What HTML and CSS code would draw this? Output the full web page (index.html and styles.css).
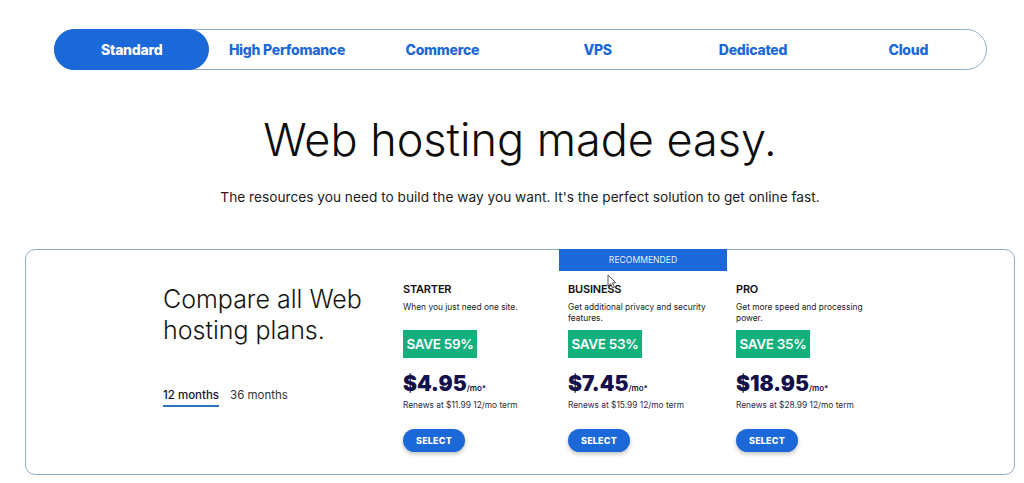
FILE: index.html
```html
<!DOCTYPE html>
<html lang="en">
<head>
  <meta charset="UTF-8" />
  <title>Web Hosting</title>
  <link rel="stylesheet" href="styles.css">
</head>
<body>
  <nav class="tabs">
    <a class="tab active">Standard</a>
    <a class="tab">High Perfomance</a>
    <a class="tab">Commerce</a>
    <a class="tab">VPS</a>
    <a class="tab">Dedicated</a>
    <a class="tab">Cloud</a>
  </nav>

  <div class="hero">
    <h1 class="title">Web hosting made easy.</h1>
    <p class="subtitle">The resources you need to build the way you want. It's the perfect solution to get online fast.</p>
  </div>

  <section class="compare">
    <div class="intro">
      <h2 class="intro-title">Compare all Web hosting plans.</h2>
      <div class="terms">
        <span class="term current">12 months</span>
        <span class="term">36 months</span>
      </div>
    </div>

    <div class="plan plan-starter">
      <h3 class="plan-name">STARTER</h3>
      <p class="plan-desc">When you just need one site.</p>
      <div class="save">SAVE 59%</div>
      <div class="price">$4.95<span class="per">/mo*</span></div>
      <p class="renew">Renews at $11.99 12/mo term</p>
      <a class="select">SELECT</a>
    </div>

    <div class="plan plan-business">
      <div class="recommended">RECOMMENDED</div>
      <h3 class="plan-name">BUSINESS</h3>
      <p class="plan-desc">Get additional privacy and security features.</p>
      <div class="save">SAVE 53%</div>
      <div class="price">$7.45<span class="per">/mo*</span></div>
      <p class="renew">Renews at $15.99 12/mo term</p>
      <a class="select">SELECT</a>
      <svg class="cursor" width="10" height="15" viewBox="0 0 10 15">
        <path d="M1 1v11l2.600-2.400 2 4.400 1.800-.8-2-4.300 3.400-.2z" fill="#fff" stroke="#555" stroke-width="1"/>
      </svg>
    </div>

    <div class="plan plan-pro">
      <h3 class="plan-name">PRO</h3>
      <p class="plan-desc">Get more speed and processing power.</p>
      <div class="save">SAVE 35%</div>
      <div class="price">$18.95<span class="per">/mo*</span></div>
      <p class="renew">Renews at $28.99 12/mo term</p>
      <a class="select">SELECT</a>
    </div>
  </section>
</body>
</html>
```

FILE: styles.css
```css
* {
  margin: 0;
  padding: 0;
  box-sizing: border-box;
  font-family: 'Inter', 'Liberation Sans', sans-serif;
}

body {
  background-color: #fff;
  color: #111;
  height: 483px;
  overflow: hidden;
  padding-top: 29px;
}

.tabs {
  display: flex;
  width: 933px;
  height: 41px;
  margin-left: 54px;
  border: 1px solid #8fadc9;
  border-radius: 21px;
}

.tab {
  flex: 1;
  display: flex;
  align-items: center;
  justify-content: center;
  color: #1b68d8;
  font-size: 14px;
  font-weight: 800;
  letter-spacing: -0.25px;
}

.tab.active {
  background-color: #1b68d8;
  color: #fff;
  border-radius: 21px;
  margin: -1px 0 -1px -1px;
}

.hero {
  padding-left: 16px;
  text-align: center;
}

.title {
  margin-top: 40px;
  font-size: 45px;
  line-height: 60px;
  font-weight: 300;
  color: #0c0c0c;
}

.subtitle {
  margin-top: 17px;
  font-size: 13.700px;
  line-height: 20px;
  color: #1c1c1c;
}

.compare {
  display: flex;
  width: 990px;
  height: 226px;
  margin: 42px 0 0 25px;
  padding-left: 137px;
  border: 1px solid #8fadc9;
  border-radius: 10px;
}

.intro {
  width: 240px;
  padding-top: 34px;
}

.intro-title {
  width: 215px;
  font-size: 25px;
  line-height: 31px;
  font-weight: 300;
  color: #151515;
}

.terms {
  display: flex;
  gap: 11px;
  margin-top: 40px;
  font-size: 11.500px;
}

.term {
  color: #333;
  line-height: 19px;
}

.term.current {
  color: #15152b;
  font-weight: 500;
  border-bottom: 2px solid #2f74b8;
}

.plan {
  position: relative;
  padding-top: 32px;
}

.plan-starter {
  width: 165px;
}

.plan-business {
  width: 168px;
}

.plan-pro {
  width: 150px;
}

.recommended {
  position: absolute;
  top: -1px;
  left: -9px;
  width: 168px;
  height: 22px;
  background-color: #1b68d8;
  color: #e6effc;
  font-size: 8.600px;
  line-height: 22px;
  text-align: center;
}

.cursor {
  position: absolute;
  top: 24px;
  left: 39px;
}

.plan-name {
  font-size: 11px;
  line-height: 14px;
  font-weight: 600;
  letter-spacing: -0.2px;
  color: #111;
}

.plan-desc {
  width: 140px;
  height: 28px;
  margin-top: 6px;
  font-size: 8.400px;
  line-height: 11px;
  color: #222;
}

.save {
  width: 74px;
  height: 28px;
  background-color: #12b07c;
  color: #fff;
  font-size: 13.500px;
  font-weight: 600;
  line-height: 28px;
  text-align: center;
  letter-spacing: -0.3px;
}

.price {
  margin-top: 11px;
  height: 30px;
  font-size: 21px;
  line-height: 30px;
  font-weight: 900;
  color: #14104a;
}

.per {
  font-size: 8px;
  font-weight: 600;
}

.renew {
  font-size: 8.350px;
  line-height: 12px;
  color: #2b2b45;
}

.select {
  display: block;
  width: 62px;
  height: 23px;
  margin-top: 18px;
  background-color: #1b68d8;
  color: #fff;
  border-radius: 12px;
  box-shadow: 0 2px 4px rgba(0,0,0,0.25);
  font-size: 9px;
  font-weight: 800;
  line-height: 23px;
  text-align: center;
  letter-spacing: 0.2px;
}
```
